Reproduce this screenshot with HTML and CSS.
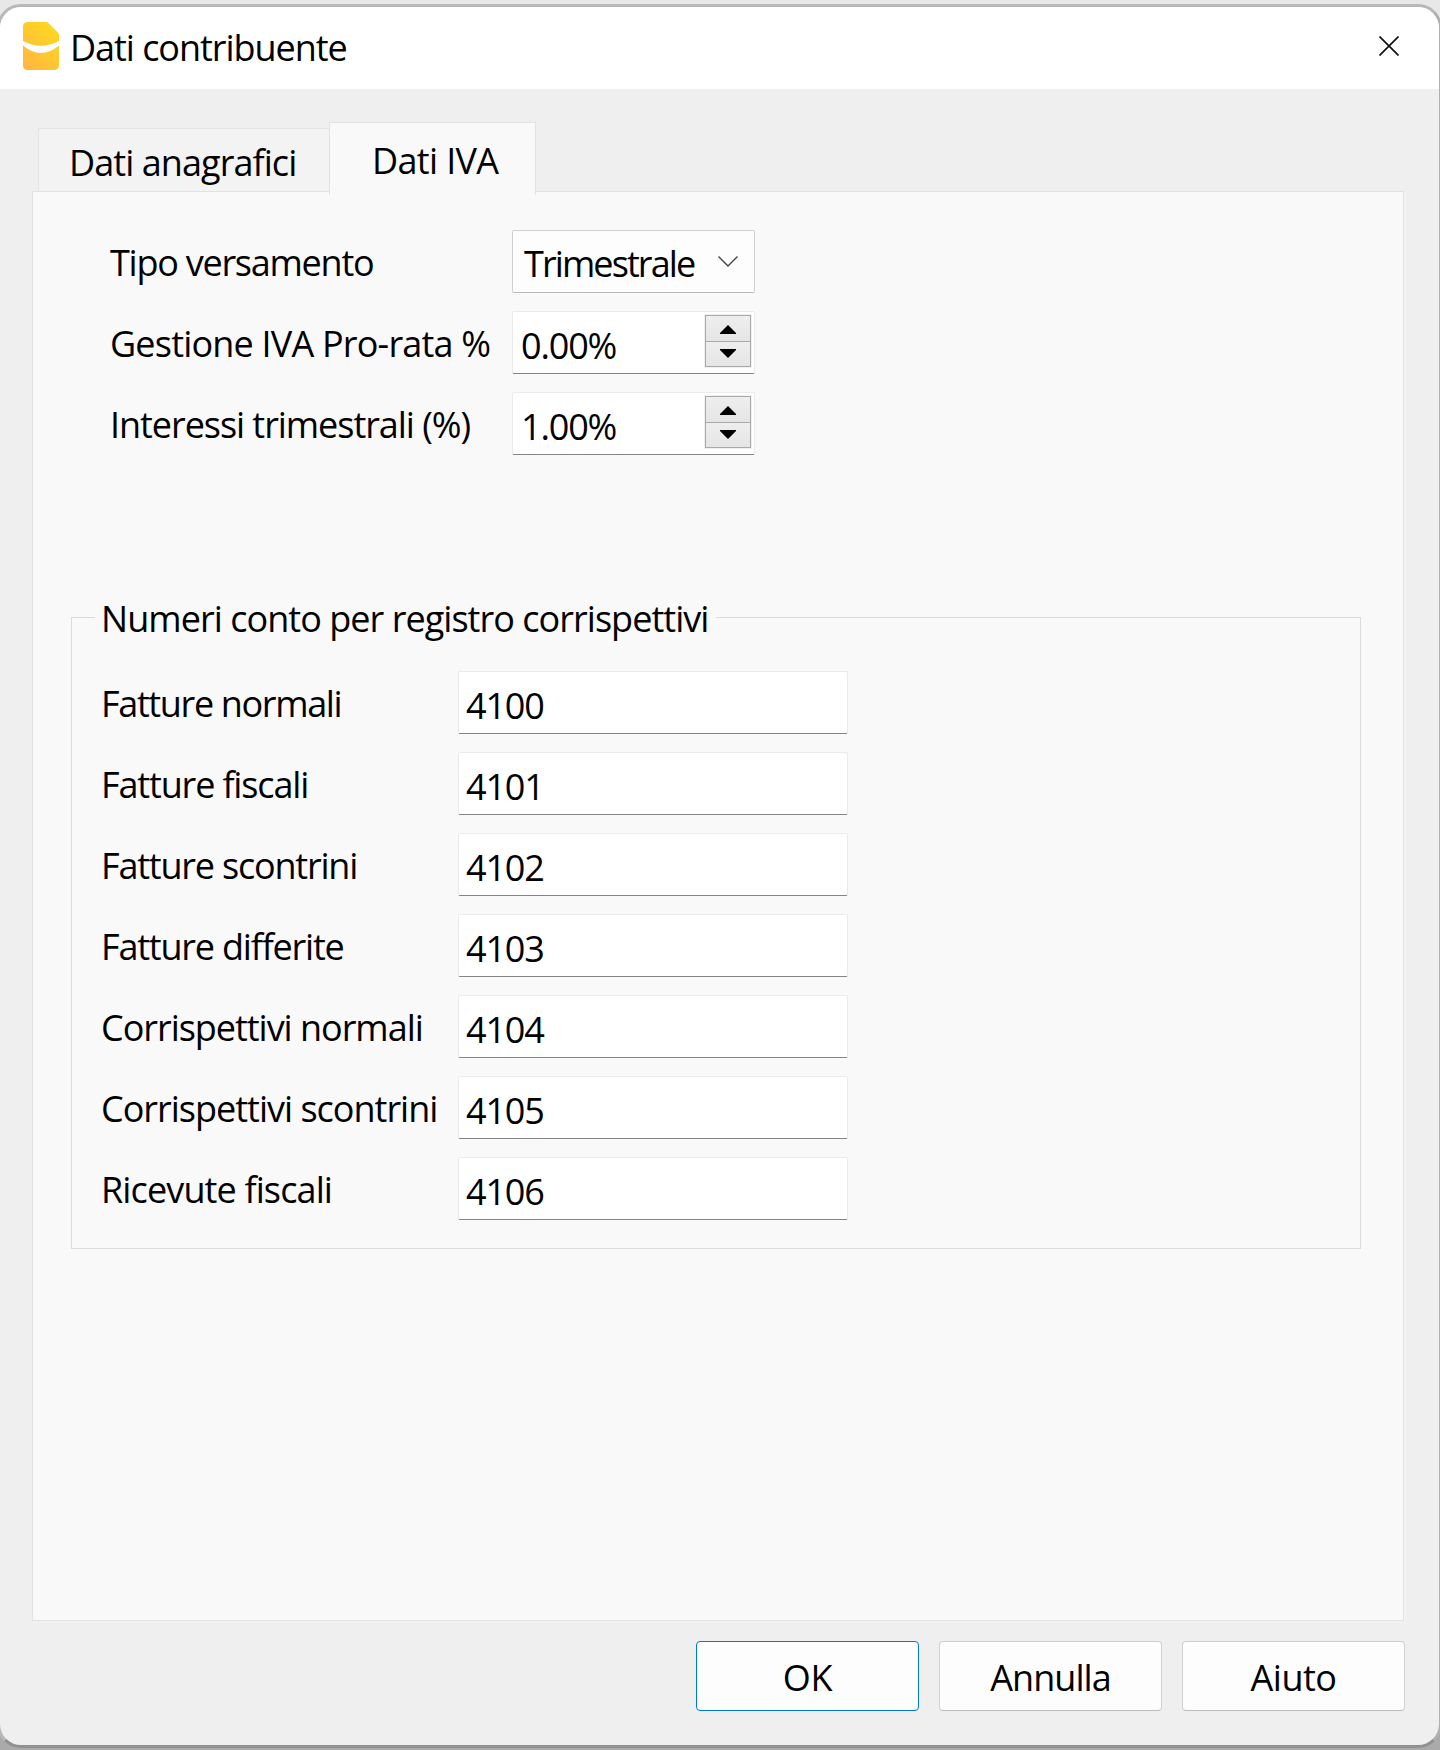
FILE: index.html
```html
<!DOCTYPE html>
<html lang="it">
<head>
<meta charset="utf-8">
<title>Dati contribuente</title>
<link rel="stylesheet" href="styles.css">
</head>
<body>
<main class="window">
  <header class="titlebar">
    <svg class="logo" width="36" height="48" viewBox="0 0 36 48">
      <defs><linearGradient id="gold" x1="0" y1="1" x2="0.8" y2="0"><stop offset="0" stop-color="#ffb443"/><stop offset="1" stop-color="#ffd91f"/></linearGradient></defs>
      <path fill="url(#gold)" d="M5 0H23Q24.500 0 25.500 1L35 10.500Q36 11.500 36 13V43Q36 48 31 48H5Q0 48 0 43V5Q0 0 5 0Z"/>
      <path fill="#fff" d="M0 19Q18 28.500 36 19V23.500Q18 38.500 0 23.500Z"/>
    </svg>
    <h1 class="title">Dati contribuente</h1>
    <svg class="close" width="20" height="20" viewBox="0 0 20 20"><path d="M.5 .5L19.500 19.500M19.500 .5L.5 19.500" fill="none" stroke="#111" stroke-width="1.700"/></svg>
  </header>

  <nav class="tabs">
    <div class="tab tab-personal">Dati anagrafici</div>
    <div class="tab tab-vat">Dati IVA</div>
  </nav>

  <section class="panel">
    <div class="settings">
      <label class="label type-label">Tipo versamento</label>
      <div class="combo"><span>Trimestrale</span>
        <svg width="20" height="11" viewBox="0 0 20 11"><path d="M.5 .5L10 10L19.500 .5" fill="none" stroke="#444" stroke-width="1.400"/></svg>
      </div>
      <label class="label prorata-label">Gestione IVA Pro-rata %</label>
      <div class="spin"><span>0.00%</span>
        <div class="stepper">
          <div class="step"><svg width="16" height="9" viewBox="0 0 16 9"><path d="M8 0L16 8V9H0V8Z"/></svg></div>
          <div class="step"><svg width="16" height="9" viewBox="0 0 16 9"><path d="M8 9L16 1V0H0V1Z"/></svg></div>
        </div>
      </div>
      <label class="label interest-label">Interessi trimestrali (%)</label>
      <div class="spin"><span>1.00%</span>
        <div class="stepper">
          <div class="step"><svg width="16" height="9" viewBox="0 0 16 9"><path d="M8 0L16 8V9H0V8Z"/></svg></div>
          <div class="step"><svg width="16" height="9" viewBox="0 0 16 9"><path d="M8 9L16 1V0H0V1Z"/></svg></div>
        </div>
      </div>
    </div>

    <fieldset class="accounts">
      <legend>Numeri conto per registro corrispettivi</legend>
      <div class="account-grid">
        <label class="label normal-label">Fatture normali</label><div class="field">4100</div>
        <label class="label fiscal-label">Fatture fiscali</label><div class="field">4101</div>
        <label class="label receipt-label">Fatture scontrini</label><div class="field">4102</div>
        <label class="label deferred-label">Fatture differite</label><div class="field">4103</div>
        <label class="label fees-label">Corrispettivi normali</label><div class="field">4104</div>
        <label class="label slips-label">Corrispettivi scontrini</label><div class="field">4105</div>
        <label class="label tax-label">Ricevute fiscali</label><div class="field">4106</div>
      </div>
    </fieldset>
  </section>

  <footer class="actions">
    <button class="btn btn-ok">OK</button>
    <button class="btn btn-cancel">Annulla</button>
    <button class="btn btn-help">Aiuto</button>
  </footer>
</main>
</body>
</html>
```
FILE: styles.css
```css
* { box-sizing: border-box; }

body {
  margin: 0;
  height: 1750px;
  padding-top: 4px;
  overflow: hidden;
  background: linear-gradient(#e8e8e8 0, #e8e8e8 50%, #aaa 50%, #aaa 100%);
  color: #000;
  font: 400 36px/1 "Open Sans", "Noto Sans", sans-serif;
  letter-spacing: -1px;
}

svg { display: block; flex: none; }

.window {
  display: flex;
  flex-direction: column;
  width: 1445px;
  height: 1744px;
  margin-left: -3px;
  border: 3px solid #b8b8b8;
  border-bottom-color: #919191;
  border-right-color: #b0b0b0;
  border-radius: 24px;
  background: #efefef;
  overflow: hidden;
}

.titlebar {
  display: flex;
  align-items: flex-start;
  height: 82px;
  padding: 0 40px 0 23px;
  background: #fff;
}
.logo { margin-top: 15px; }
.title {
  flex: 1;
  margin: 0 0 0 11px;
  font-size: 36px;
  font-weight: 400;
  line-height: 82px;
  letter-spacing: -1.050px;
}
.close { margin-top: 29px; }

.tabs {
  display: flex;
  align-items: flex-end;
  height: 104px;
  padding-left: 38px;
}
.tab {
  border: 1px solid #e3e3e3;
  border-bottom: 0;
  white-space: nowrap;
}
.tab-personal {
  width: 292px;
  height: 66px;
  margin-bottom: -1px;
  padding-left: 30px;
  background: #f3f3f3;
  line-height: 68px;
  letter-spacing: -.93px;
}
.tab-vat {
  position: relative;
  z-index: 1;
  width: 207px;
  height: 73px;
  margin: 0 0 -2px -1px;
  padding-left: 42px;
  background: #f9f9f9;
  line-height: 75px;
  letter-spacing: -.65px;
}

.panel {
  width: 1372px;
  height: 1430px;
  margin: -2px 0 0 32px;
  border: 1px solid #e2e2e2;
  background: #f9f9f9;
  box-shadow: 2px 2px 0 #f2f2f2;
}

.settings {
  display: grid;
  grid-template-columns: 402px 243px;
  grid-auto-rows: 63px;
  row-gap: 18px;
  padding: 38px 0 0 77px;
}
.label {
  line-height: 66px;
  white-space: nowrap;
}
.type-label { letter-spacing: -1.25px; }
.prorata-label { letter-spacing: -.8px; }
.interest-label { letter-spacing: -1.05px; }

.combo {
  display: flex;
  justify-content: space-between;
  align-items: center;
  padding: 0 16px 0 11px;
  border: 1px solid #d0d0d0;
  border-bottom-color: #bbb;
  border-radius: 2px;
  background: #fdfdfd;
  line-height: 61px;
  letter-spacing: -1.9px;
}
.combo span { padding-top: 3px; }

.spin, .field {
  border: 1px solid #ebebeb;
  border-bottom-color: #858585;
  border-radius: 2px;
  background: #fff;
  line-height: 68px;
  letter-spacing: -1.15px;
}
.spin {
  display: flex;
  justify-content: space-between;
  padding: 0 3px 0 8px;
}
.stepper {
  width: 46px;
  height: 52px;
  margin-top: 3px;
  border: 1px solid #a9a9a9;
  box-shadow: 0 0 0 1px #f0f0f0;
}
.step {
  display: flex;
  justify-content: center;
  height: 25px;
  padding-top: 9px;
  background: linear-gradient(#eee, #e5e5e5);
}
.step + .step {
  height: 25px;
  padding-top: 7px;
  border-top: 1px solid #a9a9a9;
}

.accounts {
  width: 1290px;
  height: 658px;
  margin: 136px 0 0 38px;
  padding: 0 0 0 23px;
  border: 1px solid #dcdcdc;
}
.accounts legend {
  width: 621px;
  height: 52px;
  padding: 2px 0 0 6px;
  line-height: 52px;
  letter-spacing: -.96px;
  white-space: nowrap;
}
.account-grid {
  display: grid;
  grid-template-columns: 357px 390px;
  grid-auto-rows: 63px;
  row-gap: 18px;
  padding: 28px 0 0 6px;
}
.field { padding-left: 7px; }
.normal-label { letter-spacing: -1.35px; }
.fiscal-label { letter-spacing: -1.15px; }
.receipt-label { letter-spacing: -1.2px; }
.deferred-label { letter-spacing: -1.2px; }
.fees-label { letter-spacing: -1.03px; }
.slips-label { letter-spacing: -1px; }
.tax-label { letter-spacing: -.87px; }

.actions {
  display: flex;
  justify-content: flex-end;
  gap: 20px;
  padding: 20px 34px 0 0;
}
.btn {
  width: 223px;
  height: 70px;
  padding: 4px 0 0;
  border: 1px solid #cfcfcf;
  border-bottom-color: #bbb;
  border-radius: 4px;
  background: #fdfdfd;
  color: #000;
  font: inherit;
  line-height: 64px;
}
.btn-ok { border-color: #0078d4; letter-spacing: -.3px; }
.btn-cancel { letter-spacing: -.95px; }
.btn-help { letter-spacing: -.5px; }
```
